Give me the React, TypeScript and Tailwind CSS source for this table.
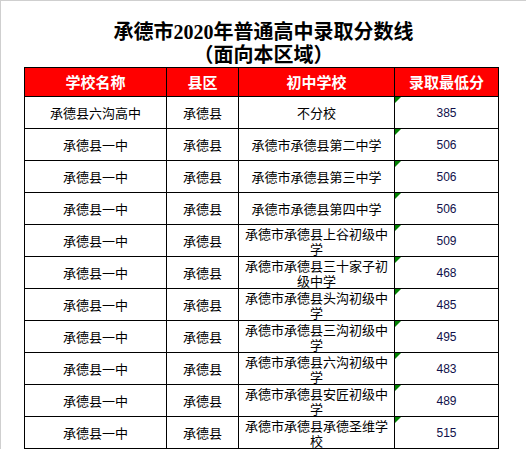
import React from 'react';

const rows = [
	{ school: '承德县六沟高中', county: '承德县', from: '不分校', score: '385' },
	{ school: '承德县一中', county: '承德县', from: '承德市承德县第二中学', score: '506' },
	{ school: '承德县一中', county: '承德县', from: '承德市承德县第三中学', score: '506' },
	{ school: '承德县一中', county: '承德县', from: '承德市承德县第四中学', score: '506' },
	{ school: '承德县一中', county: '承德县', from: '承德市承德县上谷初级中学', score: '509' },
	{ school: '承德县一中', county: '承德县', from: '承德市承德县三十家子初级中学', score: '468' },
	{ school: '承德县一中', county: '承德县', from: '承德市承德县头沟初级中学', score: '485' },
	{ school: '承德县一中', county: '承德县', from: '承德市承德县三沟初级中学', score: '495' },
	{ school: '承德县一中', county: '承德县', from: '承德市承德县六沟初级中学', score: '483' },
	{ school: '承德县一中', county: '承德县', from: '承德市承德县安匠初级中学', score: '489' },
	{ school: '承德县一中', county: '承德县', from: '承德市承德县承德圣维学校', score: '515' },
];

const cjk = "font-['SimSun','Noto_Sans_CJK_SC',sans-serif]";

export default function App() {
	return (
		<div className="w-[526px] h-[449px] overflow-hidden bg-white border-t border-l border-[#cfcfcf] pt-[19px]">
			<h1 className={`text-center text-[20px] leading-[24px] font-bold text-black font-['Liberation_Serif','Noto_Sans_CJK_SC',serif]`}>
				承德市2020年普通高中录取分数线
			</h1>
			<h2 className={`text-center text-[20px] leading-[23px] font-bold text-black font-['Liberation_Serif','Noto_Sans_CJK_SC',serif]`}>
				（面向本区域）
			</h2>

			<table className={`ml-[23px] w-[474px] border-collapse table-fixed ${cjk}`}>
				<colgroup>
					<col className="w-[142px]" />
					<col className="w-[72px]" />
					<col className="w-[156px]" />
					<col className="w-[104px]" />
				</colgroup>
				<thead>
					<tr className="h-[29px] bg-[#ff0000] text-white text-[15px] font-bold">
						<th className="border border-black p-0">学校名称</th>
						<th className="border border-black p-0">县区</th>
						<th className="border border-black p-0">初中学校</th>
						<th className="border border-black p-0">录取最低分</th>
					</tr>
				</thead>
				<tbody>
					{rows.map((r, i) => (
						<tr key={i} className="h-[32px] text-[13px] text-black">
							<td className="border border-black p-0 text-center">{r.school}</td>
							<td className="border border-black p-0 text-center">{r.county}</td>
							<td className="border border-black px-[4px] py-0 text-center leading-[15px] break-all">{r.from}</td>
							<td className="relative border border-black p-0 text-center font-['Liberation_Sans',Arial,sans-serif] text-[12px] text-[#10104a]">
								<span className="absolute left-0 top-0 w-0 h-0 border-t-[6px] border-r-[6px] border-t-[#008000] border-r-transparent" />
								{r.score}
							</td>
						</tr>
					))}
				</tbody>
			</table>
		</div>
	);
}
